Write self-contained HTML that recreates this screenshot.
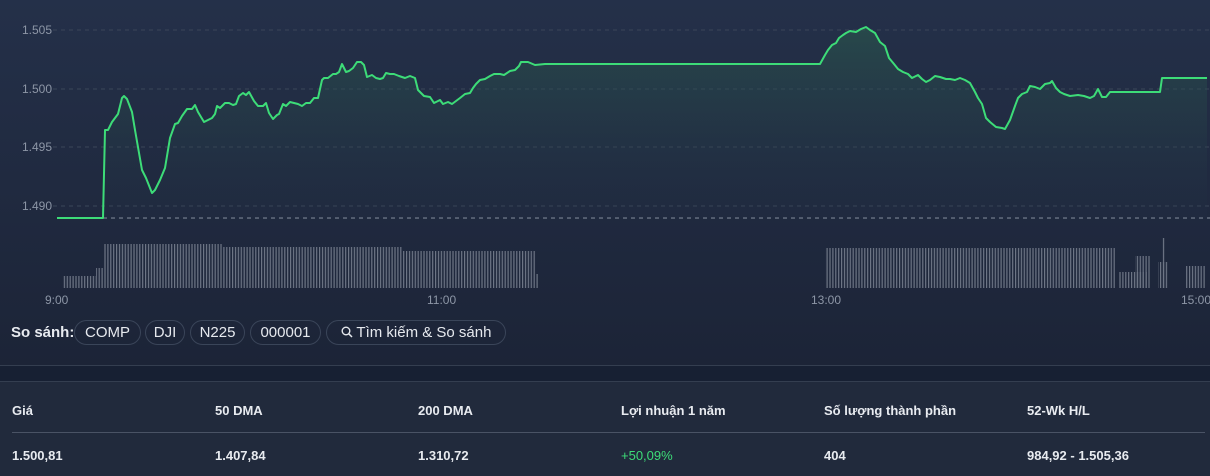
<!DOCTYPE html>
<html><head><meta charset="utf-8"><style>
*{margin:0;padding:0;box-sizing:border-box}
body{width:1210px;height:476px;overflow:hidden;font-family:"Liberation Sans","Noto Sans CJK SC",sans-serif;background:#212a3c;position:relative}
#top{position:absolute;left:0;top:0;width:1210px;height:366px;background:linear-gradient(#243049,#1c2437)}
.ax{position:absolute;font-size:12px;color:#8d96a6}
.pill{position:absolute;top:320px;height:25px;border:1px solid #3a4559;border-radius:13px;color:#e6e9ee;font-size:15px;line-height:23px;text-align:center}
#band{position:absolute;left:0;top:365px;width:1210px;height:17px;background:#172033;border-top:1px solid #343e50;border-bottom:1px solid #343e50}
.h,.v{position:absolute;font-size:13px;font-weight:bold;color:#e8ebf0}
.h{top:403px}.v{top:448px}
</style></head><body>
<div id="top"></div>
<svg style="position:absolute;left:0;top:0" width="1210" height="300">
<defs>
<linearGradient id="fg" x1="0" y1="0" x2="0" y2="1"><stop offset="0" stop-color="#2b5e4e" stop-opacity=".55"/><stop offset="1" stop-color="#233246" stop-opacity=".1"/></linearGradient>
<pattern id="bar" width="2.9" height="10" patternUnits="userSpaceOnUse"><rect x="0" y="0" width="1.2" height="10" fill="#6e7686"/></pattern>
</defs>
<g stroke="#3b4659" stroke-dasharray="4,4" stroke-width="1">
<line x1="53" y1="30" x2="1210" y2="30"/><line x1="53" y1="89" x2="1210" y2="89"/><line x1="53" y1="147" x2="1210" y2="147"/><line x1="53" y1="206" x2="1210" y2="206"/>
</g>
<line x1="103" y1="218" x2="1210" y2="218" stroke="#8a93a3" stroke-dasharray="4,4"/>
<polygon fill="url(#fg)" points="103,218 105,130 108,130 112,122 118,114 122,98 124,96 127,99 132,112 135,130 142,170 146,178 152,193 155,190 160,180 165,168 170,138 175,124 178,123 182,116 187,109 192,109 195,105 198,112 204,122 212,118 215,114 217,106 220,108 225,103 229,103 233,105 236,104 239,96 243,93 246,95 249,92 254,101 258,106 263,106 266,103 269,113 273,119 277,115 279,114 283,104 286,106 290,102 298,104 302,106 306,103 310,103 314,98 318,98 322,80 324,78 328,78 333,74 336,74 339,72 342,64 346,72 349,71 353,68 357,62 361,62 364,65 367,77 372,75 376,78 380,79 383,78 386,73 390,74 394,74 399,76 405,78 410,76 415,78 418,90 424,96 430,97 434,103 440,100 443,104 448,102 452,104 460,98 465,94 470,93 473,88 476,84 480,80 485,79 490,76 494,74 500,74 504,75 510,71 515,70 519,66 521,62 528,62 535,65 545,64 820,64 825,55 828,50 832,45 836,43 839,38 843,35 846,33 850,31 856,32 861,29 866,27 870,30 875,33 880,42 885,46 889,58 894,64 898,69 903,72 908,74 912,78 918,75 922,79 926,82 930,80 935,76 940,77 946,79 950,79 955,80 960,78 965,80 970,83 975,92 978,98 982,104 986,118 990,122 996,127 1002,128 1005,129 1010,120 1015,106 1018,98 1022,94 1027,92 1030,86 1035,87 1040,89 1045,84 1050,83 1052,81 1056,88 1060,92 1064,94 1070,96 1078,95 1084,96 1090,98 1094,96 1098,89 1102,97 1106,97 1110,92 1160,92 1162,78 1207,78 1207,218"/>
<polyline fill="none" stroke="#3ddc78" stroke-width="2" stroke-linejoin="round" points="57,218 103,218 105,130 108,130 112,122 118,114 122,98 124,96 127,99 132,112 135,130 142,170 146,178 152,193 155,190 160,180 165,168 170,138 175,124 178,123 182,116 187,109 192,109 195,105 198,112 204,122 212,118 215,114 217,106 220,108 225,103 229,103 233,105 236,104 239,96 243,93 246,95 249,92 254,101 258,106 263,106 266,103 269,113 273,119 277,115 279,114 283,104 286,106 290,102 298,104 302,106 306,103 310,103 314,98 318,98 322,80 324,78 328,78 333,74 336,74 339,72 342,64 346,72 349,71 353,68 357,62 361,62 364,65 367,77 372,75 376,78 380,79 383,78 386,73 390,74 394,74 399,76 405,78 410,76 415,78 418,90 424,96 430,97 434,103 440,100 443,104 448,102 452,104 460,98 465,94 470,93 473,88 476,84 480,80 485,79 490,76 494,74 500,74 504,75 510,71 515,70 519,66 521,62 528,62 535,65 545,64 820,64 825,55 828,50 832,45 836,43 839,38 843,35 846,33 850,31 856,32 861,29 866,27 870,30 875,33 880,42 885,46 889,58 894,64 898,69 903,72 908,74 912,78 918,75 922,79 926,82 930,80 935,76 940,77 946,79 950,79 955,80 960,78 965,80 970,83 975,92 978,98 982,104 986,118 990,122 996,127 1002,128 1005,129 1010,120 1015,106 1018,98 1022,94 1027,92 1030,86 1035,87 1040,89 1045,84 1050,83 1052,81 1056,88 1060,92 1064,94 1070,96 1078,95 1084,96 1090,98 1094,96 1098,89 1102,97 1106,97 1110,92 1160,92 1162,78 1207,78"/>
<g fill="url(#bar)">
<rect x="63" y="276" width="33" height="12"/>
<rect x="96" y="268" width="7" height="20"/>
<rect x="103" y="244" width="120" height="44"/>
<rect x="223" y="247" width="180" height="41"/>
<rect x="403" y="251" width="133" height="37"/>
<rect x="536" y="274" width="3" height="14"/>
<rect x="825" y="248" width="290" height="40"/>
<rect x="1118" y="272" width="30" height="16"/>
<rect x="1135" y="256" width="15" height="32"/>
<rect x="1158" y="262" width="10" height="26"/>
<rect x="1162" y="238" width="3" height="50"/>
<rect x="1186" y="266" width="20" height="22"/>
</g>
</svg>
<div class="ax" style="left:22px;top:23px">1.505</div>
<div class="ax" style="left:22px;top:82px">1.500</div>
<div class="ax" style="left:22px;top:140px">1.495</div>
<div class="ax" style="left:22px;top:199px">1.490</div>
<div class="ax" style="left:45px;top:293px">9:00</div>
<div class="ax" style="left:427px;top:293px">11:00</div>
<div class="ax" style="left:811px;top:293px">13:00</div>
<div class="ax" style="left:1181px;top:293px">15:00</div>
<div style="position:absolute;left:11px;top:324px;font-size:15px;font-weight:bold;color:#e8ebf0">So sánh:</div>
<div class="pill" style="left:74px;width:67px">COMP</div>
<div class="pill" style="left:145px;width:40px">DJI</div>
<div class="pill" style="left:190px;width:55px">N225</div>
<div class="pill" style="left:250px;width:71px">000001</div>
<div class="pill" style="left:326px;width:180px"><svg width="12" height="12" viewBox="0 0 12 12" style="vertical-align:-1px"><circle cx="5" cy="5" r="3.8" fill="none" stroke="#e6e9ee" stroke-width="1.4"/><line x1="7.8" y1="7.8" x2="11" y2="11" stroke="#e6e9ee" stroke-width="1.5"/></svg> Tìm kiếm &amp; So sánh</div>
<div id="band"></div>
<div class="h" style="left:12px">Giá</div><div class="h" style="left:215px">50 DMA</div><div class="h" style="left:418px">200 DMA</div><div class="h" style="left:621px">Lợi nhuận 1 năm</div><div class="h" style="left:824px">Số lượng thành phần</div><div class="h" style="left:1027px">52-Wk H/L</div>
<div style="position:absolute;left:12px;top:432px;width:1193px;height:1px;background:#4a5365"></div>
<div class="v" style="left:12px">1.500,81</div><div class="v" style="left:215px">1.407,84</div><div class="v" style="left:418px">1.310,72</div><div class="v" style="left:621px;color:#3ddc78;font-weight:normal">+50,09%</div><div class="v" style="left:824px">404</div><div class="v" style="left:1027px">984,92 - 1.505,36</div>
</body></html>
